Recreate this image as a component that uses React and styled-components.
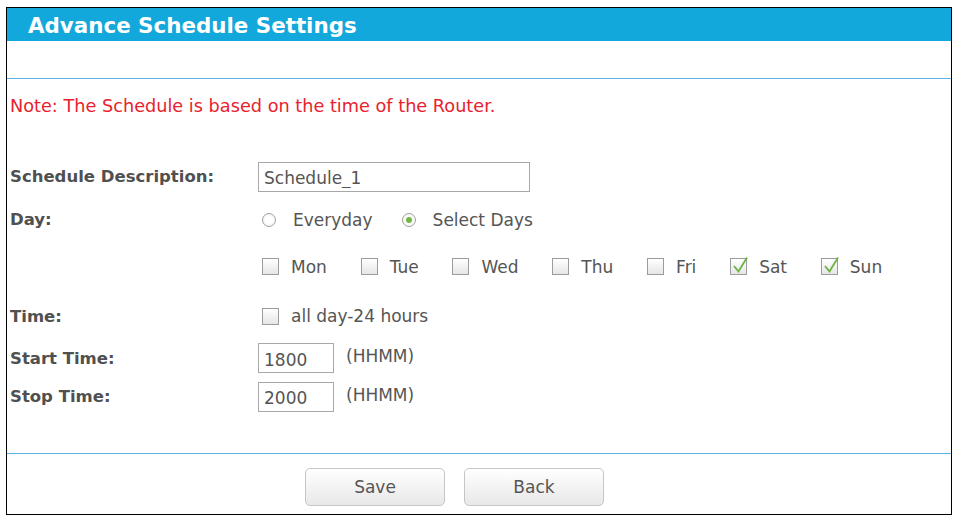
import React from 'react';
import styled, { createGlobalStyle } from 'styled-components';

const GlobalStyle = createGlobalStyle`
  body {
    margin: 0;
    background: #fff;
    font-family: "DejaVu Sans", Verdana, sans-serif;
    color: #555;
  }
`;

const Frame = styled.div`
  box-sizing: border-box;
  margin: 7px 0 0 6px;
  width: 946px;
  height: 508px;
  border: 1px solid #000;
  display: flex;
  flex-direction: column;
`;

const Header = styled.div`
  height: 33px;
  background: #12a8dc;
  color: #fff;
  font-size: 21.4px;
  font-weight: bold;
  padding: 2px 0 0 21px;
  box-sizing: border-box;
  display: flex;
  align-items: center;
`;

const Divider = styled.div`
  height: ${({ h }) => h}px;
  flex-shrink: 0;
  border-bottom: 1px solid #5ab4e6;
`;

const Note = styled.div`
  margin-top: 17px;
  padding-left: 3px;
  font-size: 17.7px;
  line-height: 20px;
  color: #e8222d;
`;

const Form = styled.div`
  margin-top: 39px;
  padding-left: 3px;
`;

const Row = styled.div`
  display: grid;
  grid-template-columns: 248px 1fr;
  align-items: center;
  height: ${({ h }) => h}px;
`;

const Label = styled.div`
  font-size: 16.5px;
  font-weight: bold;
  color: #505050;
`;

const Value = styled.div`
  display: flex;
  align-items: center;
  font-size: 17px;
  color: #555;
`;

const TextBox = styled.input`
  box-sizing: border-box;
  width: ${({ w }) => w}px;
  height: 30px;
  border: 1px solid #a8a8a8;
  padding: 3px 0 0 5px;
  margin: 0;
  font-family: "DejaVu Sans", Verdana, sans-serif;
  font-size: 17px;
  color: #555;
  background: #fff;
  outline: none;
`;

const Hint = styled.span`
  margin: 0 0 4px 12px;
`;

const Choice = styled.span`
  display: inline-flex;
  align-items: center;
  margin-right: ${({ gap }) => gap}px;
`;

const RadioMark = styled.span`
  box-sizing: border-box;
  width: 14px;
  height: 14px;
  margin: 0 17px 0 4px;
  border-radius: 50%;
  border: 1.7px solid #a2a2a2;
  background: radial-gradient(circle, #fff 40%, #e8e8e8 100%);
  display: flex;
  align-items: center;
  justify-content: center;

  &::after {
    content: '';
    width: 6px;
    height: 6px;
    border-radius: 50%;
    background: ${({ checked }) => (checked ? '#70b83f' : 'transparent')};
  }
`;

const BoxMark = styled.span`
  box-sizing: border-box;
  position: relative;
  width: 17px;
  height: 17px;
  margin: 0 12px 0 4px;
  border: 1px solid #9c9c9c;
  background: linear-gradient(#ffffff, #e6e6e6);

  svg {
    position: absolute;
    left: 1px;
    top: -3px;
    overflow: visible;
  }
`;

const ButtonBar = styled.div`
  display: flex;
  gap: 19px;
  margin-top: 14px;
  padding-left: 298px;
`;

const Button = styled.button`
  box-sizing: border-box;
  width: 140px;
  height: 38px;
  border: 1px solid #c6c6c6;
  border-radius: 5px;
  background: linear-gradient(#ffffff, #e8e8e8);
  font-family: "DejaVu Sans", Verdana, sans-serif;
  font-size: 17px;
  color: #555;
  padding: 0;
`;

const Radio = ({ checked, label, gap }) => (
  <Choice gap={gap}>
    <RadioMark checked={checked} />
    {label}
  </Choice>
);

const Check = ({ checked, label, gap }) => (
  <Choice gap={gap}>
    <BoxMark>
      {checked && (
        <svg width="16" height="18" viewBox="0 0 16 18">
          <path d="M2 10 L6.5 15.5 L15 1.5" fill="none" stroke="#6db33f" strokeWidth="1.8" />
        </svg>
      )}
    </BoxMark>
    {label}
  </Choice>
);

const days = [
  { name: 'Mon', on: false },
  { name: 'Tue', on: false },
  { name: 'Wed', on: false },
  { name: 'Thu', on: false },
  { name: 'Fri', on: false },
  { name: 'Sat', on: true },
  { name: 'Sun', on: true },
];

export default function App() {
  return (
    <>
      <GlobalStyle />
      <Frame>
        <Header>Advance Schedule Settings</Header>
        <Divider h={37} />
        <Note>Note: The Schedule is based on the time of the Router.</Note>
        <Form>
          <Row h={43}>
            <Label>Schedule Description:</Label>
            <Value>
              <TextBox w={272} defaultValue="Schedule_1" readOnly />
            </Value>
          </Row>
          <Row h={43}>
            <Label>Day:</Label>
            <Value>
              <Radio label="Everyday" gap={25} />
              <Radio label="Select Days" checked gap={0} />
            </Value>
          </Row>
          <Row h={51}>
            <div />
            <Value>
              {days.map((d) => (
                <Check key={d.name} label={d.name} checked={d.on} gap={29.8} />
              ))}
            </Value>
          </Row>
          <Row h={48}>
            <Label>Time:</Label>
            <Value>
              <Check label="all day-24 hours" gap={0} />
            </Value>
          </Row>
          <Row h={36}>
            <Label>Start Time:</Label>
            <Value>
              <TextBox w={76} defaultValue="1800" readOnly />
              <Hint>(HHMM)</Hint>
            </Value>
          </Row>
          <Row h={41}>
            <Label>Stop Time:</Label>
            <Value>
              <TextBox w={76} defaultValue="2000" readOnly />
              <Hint>(HHMM)</Hint>
            </Value>
          </Row>
        </Form>
        <Divider h={36} />
        <ButtonBar>
          <Button>Save</Button>
          <Button>Back</Button>
        </ButtonBar>
      </Frame>
    </>
  );
}
